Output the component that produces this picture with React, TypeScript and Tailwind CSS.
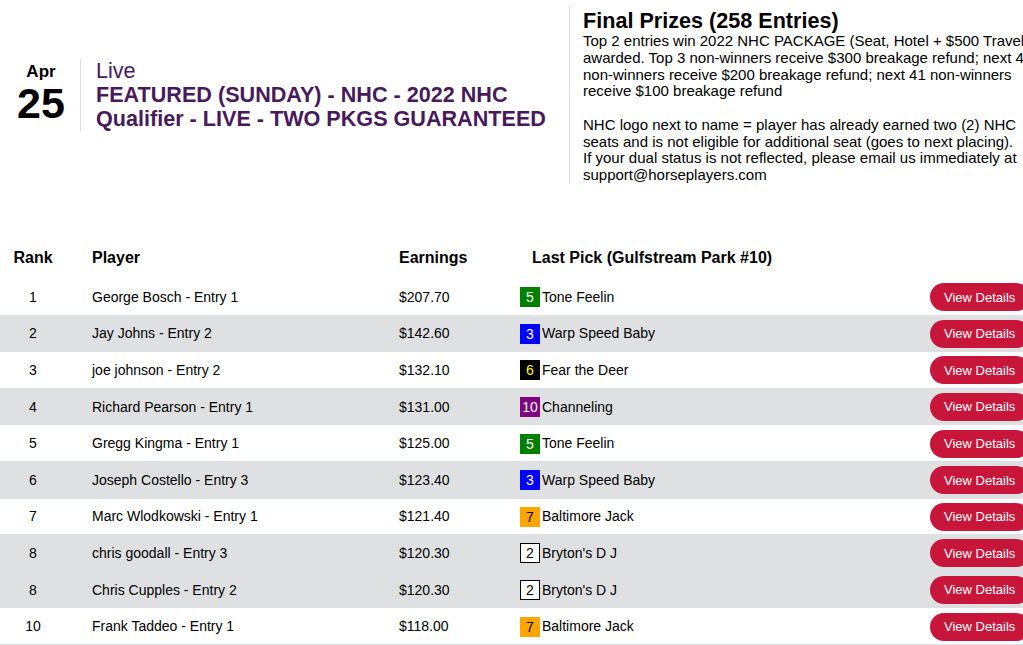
import React from "react";

type Row = {
  rank: string;
  player: string;
  earnings: string;
  num: string;
  horse: string;
  badge: string;
  gray: boolean;
};

const rows: Row[] = [
  { rank: "1", player: "George Bosch - Entry 1", earnings: "$207.70", num: "5", horse: "Tone Feelin", badge: "bg-[#008000] text-white", gray: false },
  { rank: "2", player: "Jay Johns - Entry 2", earnings: "$142.60", num: "3", horse: "Warp Speed Baby", badge: "bg-[#0000ff] text-white", gray: true },
  { rank: "3", player: "joe johnson - Entry 2", earnings: "$132.10", num: "6", horse: "Fear the Deer", badge: "bg-black text-[#ffff00]", gray: false },
  { rank: "4", player: "Richard Pearson - Entry 1", earnings: "$131.00", num: "10", horse: "Channeling", badge: "bg-[#800080] text-white", gray: true },
  { rank: "5", player: "Gregg Kingma - Entry 1", earnings: "$125.00", num: "5", horse: "Tone Feelin", badge: "bg-[#008000] text-white", gray: false },
  { rank: "6", player: "Joseph Costello - Entry 3", earnings: "$123.40", num: "3", horse: "Warp Speed Baby", badge: "bg-[#0000ff] text-white", gray: true },
  { rank: "7", player: "Marc Wlodkowski - Entry 1", earnings: "$121.40", num: "7", horse: "Baltimore Jack", badge: "bg-[#ffa500] text-black", gray: false },
  { rank: "8", player: "chris goodall - Entry 3", earnings: "$120.30", num: "2", horse: "Bryton's D J", badge: "bg-white text-black border border-black", gray: true },
  { rank: "8", player: "Chris Cupples - Entry 2", earnings: "$120.30", num: "2", horse: "Bryton's D J", badge: "bg-white text-black border border-black", gray: true },
  { rank: "10", player: "Frank Taddeo - Entry 1", earnings: "$118.00", num: "7", horse: "Baltimore Jack", badge: "bg-[#ffa500] text-black", gray: false },
];

const para1 = [
  "Top 2 entries win 2022 NHC PACKAGE (Seat, Hotel + $500 Travel)",
  "awarded. Top 3 non-winners receive $300 breakage refund; next 4",
  "non-winners receive $200 breakage refund; next 41 non-winners",
  "receive $100 breakage refund",
];
const para2 = [
  "NHC logo next to name = player has already earned two (2) NHC",
  "seats and is not eligible for additional seat (goes to next placing).",
  "If your dual status is not reflected, please email us immediately at",
  "support@horseplayers.com",
];

export default function App() {
  return (
    <div className="w-[1023px] h-[645px] overflow-hidden bg-white text-black font-['Liberation_Sans',Arial,sans-serif]">
      <div className="w-[1080px]">
        {/* Top section */}
        <div className="flex items-center h-[190px]">
          <div className="flex items-center pl-[15px]">
            <div className="w-[52px] flex flex-col items-center -mt-[3px]">
              <div className="text-[17px] font-bold leading-[18px]">Apr</div>
              <div className="text-[43px] font-bold leading-[44px]">25</div>
            </div>
            <div className="ml-[13px] border-l border-[#dcdcdc] pl-[15px] w-[473px] text-[#481a5c] text-[21.6px] leading-[24px]">
              <div>Live</div>
              <div className="font-bold whitespace-nowrap">FEATURED (SUNDAY) - NHC - 2022 NHC</div>
              <div className="font-bold whitespace-nowrap">Qualifier - LIVE - TWO PKGS GUARANTEED</div>
            </div>
          </div>
          <div className="ml-[16px] border-l border-[#dcdcdc] pl-[13px] w-[475px] text-[15px] leading-[16.7px]">
            <div className="text-[21.6px] font-bold leading-[24px] pt-[3px]">Final Prizes (258 Entries)</div>
            <div>
              {para1.map((l, i) => (
                <div key={i} className="whitespace-nowrap">{l}</div>
              ))}
            </div>
            <div className="h-[16.7px]" />
            <div>
              {para2.map((l, i) => (
                <div key={i} className="whitespace-nowrap">{l}</div>
              ))}
            </div>
          </div>
        </div>

        {/* Table */}
        <div className="mt-[50px]">
          <div className="flex items-center h-[39px] pb-[4px] text-[16px] font-bold">
            <div className="w-[66px] text-center">Rank</div>
            <div className="w-[333px] pl-[26px]">Player</div>
            <div className="w-[121px]">Earnings</div>
            <div className="pl-[12px]">Last Pick (Gulfstream Park #10)</div>
          </div>
          {rows.map((r, i) => (
            <div
              key={i}
              className={`flex items-center h-[36.6px] pt-[1px] text-[14px] border-b border-[#dfe0e2] ${r.gray ? "bg-[#dfe0e2]" : "bg-white"}`}
            >
              <div className="w-[66px] text-center">{r.rank}</div>
              <div className="w-[333px] pl-[26px]">{r.player}</div>
              <div className="w-[121px]">{r.earnings}</div>
              <div className="w-[410px] flex items-center">
                <span className={`w-[20px] h-[20px] flex items-center justify-center text-[14px] leading-none ${r.badge}`}>
                  {r.num}
                </span>
                <span className="ml-[2px]">{r.horse}</span>
              </div>
              <button className="w-[100px] h-[28px] rounded-full bg-[#c8163a] text-white text-[13px] pl-[14px] text-left">
                View Details
              </button>
            </div>
          ))}
        </div>
      </div>
    </div>
  );
}
